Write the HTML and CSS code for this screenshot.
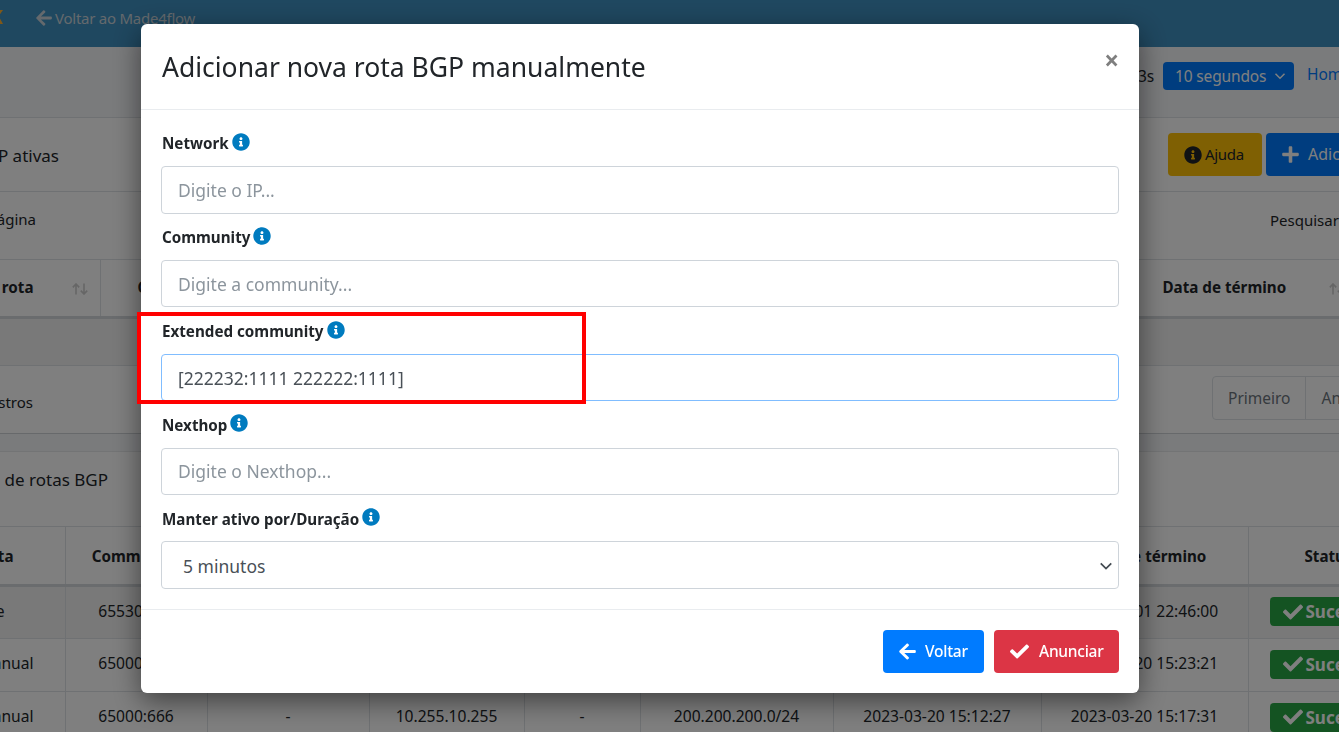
FILE: index.html
```html
<!DOCTYPE html>
<html lang="pt-BR">
<head>
<meta charset="utf-8">
<title>Rotas BGP</title>
<link rel="stylesheet" href="styles.css">
</head>
<body>
<svg class="defs" width="0" height="0" aria-hidden="true">
  <symbol id="i-info" viewBox="0 0 512 512"><path fill="currentColor" d="M256 8C119.043 8 8 119.083 8 256c0 136.997 111.043 248 248 248s248-111.003 248-248C504 119.083 392.957 8 256 8zm0 110c23.196 0 42 18.804 42 42s-18.804 42-42 42-42-18.804-42-42 18.804-42 42-42zm56 254c0 6.627-5.373 12-12 12h-88c-6.627 0-12-5.373-12-12v-24c0-6.627 5.373-12 12-12h12v-64h-12c-6.627 0-12-5.373-12-12v-24c0-6.627 5.373-12 12-12h64c6.627 0 12 5.373 12 12v100h12c6.627 0 12 5.373 12 12v24z"/></symbol>
  <symbol id="i-left" viewBox="0 0 448 512"><path fill="currentColor" d="M257.5 445.1l-22.2 22.2c-9.4 9.4-24.6 9.4-33.9 0L7 273c-9.4-9.4-9.4-24.6 0-33.9L201.4 44.7c9.4-9.4 24.6-9.4 33.9 0l22.2 22.2c9.5 9.5 9.3 25-.4 34.3L136.6 216H424c13.3 0 24 10.7 24 24v32c0 13.3-10.7 24-24 24H136.6l120.5 114.8c9.8 9.3 10 24.8.4 34.3z"/></symbol>
  <symbol id="i-check" viewBox="0 0 512 512"><path fill="currentColor" d="M173.898 439.404l-166.4-166.4c-9.997-9.997-9.997-26.206 0-36.204l36.203-36.204c9.997-9.998 26.207-9.998 36.204 0L192 312.69 432.095 72.596c9.997-9.997 26.207-9.997 36.204 0l36.203 36.204c9.997 9.997 9.997 26.206 0 36.204l-294.4 294.401c-9.998 9.997-26.207 9.997-36.204-.001z"/></symbol>
  <symbol id="i-plus" viewBox="0 0 448 512"><path fill="currentColor" d="M416 208H272V64c0-17.67-14.33-32-32-32h-32c-17.67 0-32 14.33-32 32v144H32c-17.67 0-32 14.33-32 32v32c0 17.67 14.33 32 32 32h144v144c0 17.67 14.33 32 32 32h32c17.67 0 32-14.33 32-32V304h144c17.67 0 32-14.33 32-32v-32c0-17.67-14.33-32-32-32z"/></symbol>
  <symbol id="i-sort" viewBox="0 0 16 12"><path fill="none" stroke="currentColor" stroke-width="1.6" d="M4 11.5V1M0.8 4.4L4 1l3.2 3.4M12 .5V11M8.8 7.6L12 11l3.2-3.4"/></symbol>
  <symbol id="i-logo" viewBox="0 0 16 16"><path fill="currentColor" d="M0 0h5l3 4 3-4h5l-5 7 5 9h-5l-3-5-3 5H0l5-9z"/></symbol>
</svg>

<div class="page">
  <header class="navbar">
    <svg class="nav-logo"><use href="#i-logo"/></svg>
    <a class="nav-back"><svg class="nav-arrow"><use href="#i-left"/></svg>Voltar ao Made4flow</a>
  </header>

  <div class="subbar">
    <span class="timer">3s</span>
    <span class="refresh">10 segundos <svg class="refresh-caret" viewBox="0 0 16 16"><path d="M2 5l6 6 6-6" fill="none" stroke="currentColor" stroke-width="2"/></svg></span>
    <a class="crumb">Home</a>
  </div>

  <section class="card">
    <div class="card-head">
      <h2 class="card-title card-title-a">Rotas BGP ativas</h2>
      <button class="btn-help"><svg class="help-icon"><use href="#i-info"/></svg><span class="btn-text">Ajuda</span></button>
      <button class="btn-add"><svg class="add-icon"><use href="#i-plus"/></svg><span class="btn-text">Adicionar</span></button>
    </div>
    <div class="tools">
      <span class="per-page">por página</span>
      <span class="search">Pesquisar</span>
    </div>
    <table class="grid grid-a">
      <colgroup><col class="a1"><col class="a2"><col class="a3"><col class="a4"></colgroup>
      <thead>
        <tr>
          <th class="th-rota">Tipo de rota<svg class="sort sort-a"><use href="#i-sort"/></svg></th>
          <th class="th-left">Community</th>
          <th></th>
          <th class="th-left th-end">Data de término<svg class="sort sort-b"><use href="#i-sort"/></svg></th>
        </tr>
      </thead>
      <tbody>
        <tr class="empty"><td colspan="4"></td></tr>
      </tbody>
    </table>
    <div class="card-foot">
      <span class="count">0 registros</span>
      <span class="pager"><a class="pager-item">Primeiro</a><a class="pager-item">Anterior</a></span>
    </div>
  </section>

  <section class="card card-second">
    <div class="card-head-b">
      <h2 class="card-title card-title-b">Histórico de rotas BGP</h2>
    </div>
    <table class="grid grid-b">
      <colgroup><col class="b1"><col class="b2"><col class="b3"><col class="b4"><col class="b5"><col class="b6"><col class="b7"><col class="b8"><col class="b9"></colgroup>
      <thead>
        <tr>
          <th class="c1 c1-h">Tipo de rota</th><th>Community</th><th>Ext</th><th>Nexthop</th><th>Tag</th><th>Network</th><th>Data de início</th><th>Data de término</th><th>Status</th>
        </tr>
      </thead>
      <tbody>
        <tr class="odd"><td class="c1 c1-r1">Rule</td><td>65530:666</td><td>-</td><td>10.255.10.255</td><td>-</td><td>200.200.200.0/24</td><td>2023-03-01 22:40:00</td><td>2023-03-01 22:46:00</td><td class="st"><span class="badge"><svg class="badge-icon"><use href="#i-check"/></svg>Sucesso</span></td></tr>
        <tr><td class="c1 c1-r">Manual</td><td>65000:666</td><td>-</td><td>10.255.10.255</td><td>-</td><td>200.200.200.0/24</td><td>2023-03-20 15:18:21</td><td>2023-03-20 15:23:21</td><td class="st"><span class="badge"><svg class="badge-icon"><use href="#i-check"/></svg>Sucesso</span></td></tr>
        <tr><td class="c1 c1-r">Manual</td><td>65000:666</td><td>-</td><td>10.255.10.255</td><td>-</td><td>200.200.200.0/24</td><td>2023-03-20 15:12:27</td><td>2023-03-20 15:17:31</td><td class="st"><span class="badge"><svg class="badge-icon"><use href="#i-check"/></svg>Sucesso</span></td></tr>
      </tbody>
    </table>
  </section>
</div>

<div class="backdrop">
  <div class="modal">
    <div class="modal-head">
      <h1 class="modal-title">Adicionar nova rota BGP manualmente</h1>
      <span class="close">×</span>
    </div>
    <form class="modal-body">
      <div class="group">
        <label class="label">Network <svg class="info"><use href="#i-info"/></svg></label>
        <input class="field" placeholder="Digite o IP...">
      </div>
      <div class="group">
        <label class="label">Community <svg class="info"><use href="#i-info"/></svg></label>
        <input class="field" placeholder="Digite a community...">
      </div>
      <div class="group">
        <label class="label">Extended community <svg class="info"><use href="#i-info"/></svg></label>
        <input class="field field-focus" value="[222232:1111 222222:1111]">
      </div>
      <div class="group">
        <label class="label">Nexthop <svg class="info"><use href="#i-info"/></svg></label>
        <input class="field" placeholder="Digite o Nexthop...">
      </div>
      <div class="group">
        <label class="label">Manter ativo por/Duração <svg class="info"><use href="#i-info"/></svg></label>
        <div class="field field-select">5 minutos<svg class="select-caret" viewBox="0 0 16 16"><path d="M2 5l6 6 6-6" fill="none" stroke="currentColor" stroke-width="2"/></svg></div>
      </div>
    </form>
    <div class="modal-foot">
      <button class="action action-back"><svg class="action-icon"><use href="#i-left"/></svg>Voltar</button>
      <button class="action action-send"><svg class="action-icon action-check"><use href="#i-check"/></svg>Anunciar</button>
    </div>
  </div>
</div>

<div class="annotation"></div>
</body>
</html>
```

FILE: styles.css
```css
* { box-sizing: border-box; }
html, body { margin: 0; height: 100%; overflow: hidden; }
body {
  font-family: "Noto Sans", "Open Sans", sans-serif;
  font-size: 15.5px;
  color: #212529;
  background: #f4f6f9;
}
.defs { position: absolute; }

.page { width: 1339px; height: 732px; overflow: hidden; }

.navbar {
  height: 47px;
  background: #3f90c0;
  display: flex;
  align-items: flex-start;
  padding-top: 8px;
  color: #c9d3da;
}
.nav-logo { width: 16px; height: 14px; margin: 2px 32px 0 -12px; color: #ffb030; flex: none; }
.nav-back { display: flex; align-items: center; font-size: 15px; line-height: 20px; letter-spacing: -.25px; }
.nav-arrow { width: 16px; height: 18px; margin-right: 3px; }

.subbar {
  height: 71px;
  display: flex;
  align-items: center;
  border-bottom: 1px solid #dee2e6;
  padding-bottom: 13px;
  padding-left: 1138px;
  white-space: nowrap;
  overflow: hidden;
}
.timer { width: 25px; flex: none; }
.refresh {
  flex: none;
  width: 131px; height: 28px;
  background: #007bff;
  color: #fff;
  border-radius: 4px;
  display: flex; align-items: center;
  padding-left: 12px;
  font-size: 15.5px;
  letter-spacing: -.15px;
}
.refresh-caret { width: 12px; height: 12px; margin-left: 8px; }
.crumb { flex: none; margin-left: 13px; color: #007bff; margin-top: -4px; }

.card { background: #fff; }
.card-head {
  height: 74px;
  display: flex; align-items: center;
  border-bottom: 1px solid #dee2e6;
  padding-left: 1168px;
  position: relative;
  white-space: nowrap;
  overflow: hidden;
}
.card-title { font-weight: 400; font-size: 17px; margin: 0; white-space: nowrap; }
.card-title-a { position: absolute; right: 1280px; top: 26px; }
.btn-help, .btn-add {
  height: 43px; border: 0; border-radius: 4px;
  font: inherit; font-size: 15px;
  display: flex; align-items: center; flex: none;
}
.btn-text { padding-bottom: 2px; }
.btn-help { width: 94px; background: #ffc107; color: #212529; padding: 0 0 0 16px; letter-spacing: -.3px; }
.help-icon { width: 18px; height: 18px; margin-right: 3px; }
.btn-add { width: 130px; margin-left: 4px; background: #007bff; color: #fff; padding: 0 0 0 16px; font-size: 16px; }
.add-icon { width: 17px; height: 19px; margin-right: 9px; }

.tools {
  height: 67px;
  position: relative;
  display: flex; align-items: center;
  padding-left: 1270px;
  padding-bottom: 11px;
  white-space: nowrap;
  overflow: hidden;
}
.search { flex: none; font-size: 15px; }
.per-page { position: absolute; right: 1303px; top: 17px; font-size: 15px; }

.grid { border-collapse: collapse; table-layout: fixed; white-space: nowrap; }
.grid th { font-weight: 700; font-size: 15.2px; border-right: 1px solid #dee2e6; border-top: 1px solid #dee2e6; border-bottom: 3px solid #d4d8dc; position: relative; padding: 0 0 2px; }
.grid-a { width: 1500px; margin-left: -100px; }
.grid-a thead tr { height: 58px; }
.a1 { width: 200px; } .a2 { width: 800px; } .a3 { width: 200px; } .a4 { width: 300px; }
.grid .th-rota { text-align: right; padding-right: 66px; }
.grid .th-left { text-align: left; padding-left: 37px; }
.grid .th-end { border-right: 0; padding-left: 62px; }
.sort { position: absolute; top: 23px; width: 16px; height: 12px; color: #ccc; }
.sort-a { left: 172px; }
.sort-b { left: 228px; }
.empty { height: 48px; background: #f2f2f2; }
.empty td { border-bottom: 1px solid #dee2e6; }

.card-foot {
  height: 68px;
  display: flex; align-items: center;
  padding-left: 1212px;
  padding-bottom: 4px;
  position: relative;
  white-space: nowrap;
  border-bottom: 1px solid #ced2d6;
  overflow: hidden;
}
.count { position: absolute; right: 1306px; top: 26px; font-size: 15px; }
.pager { display: flex; flex: none; height: 44px; border: 1px solid #dee2e6; border-radius: 4px 0 0 4px; color: #6c757d; }
.pager-item { padding: 0 15px; display: flex; align-items: center; border-right: 1px solid #dee2e6; }

.card-second { margin-top: 17px; border-top: 1px solid #e6e8ea; }
.card-head-b { height: 74px; position: relative; }
.card-title-b { position: absolute; right: 1231px; top: 16px; }
.grid-b { width: 1409px; margin-left: -100px; }
.b1 { width: 165px; } .b2 { width: 142px; } .b3 { width: 162px; } .b4 { width: 155px; } .b5 { width: 116px; } .b6 { width: 193px; } .b7 { width: 208px; } .b8 { width: 207px; } .b9 { width: 161px; }
.grid-b thead tr { height: 59px; }
.grid .grid-b-th, .grid-b th { text-align: center; padding-bottom: 0; }
.grid-b td { text-align: center; border-right: 1px solid #dee2e6; border-bottom: 1px solid #dee2e6; padding: 0 0 4px; height: 53px; font-size: 15.6px; }
.grid-b .c1 { text-align: right; }
.grid-b .c1-h { padding-right: 51px; }
.grid-b .c1-r1 { padding-right: 60px; }
.grid-b .c1-r { padding-right: 31px; }
.odd { background: #f2f2f2; }
.grid-b .st { text-align: left; padding: 0 0 2px 21px; }
.badge {
  display: inline-flex; align-items: center;
  height: 29px; padding: 0 10px 0 13px;
  background: #28a745; color: #fff;
  border-radius: 4px;
  font-weight: 700; font-size: 17px;
  vertical-align: middle;
}
.badge-icon { width: 20px; height: 20px; margin-right: 3px; }

.backdrop {
  position: fixed; inset: 0;
  background: rgba(0, 0, 0, .5);
  padding: 24px 0 0 141px;
}
.modal {
  width: 998px;
  background: #fff;
  border-radius: 6px;
  box-shadow: 0 8px 28px rgba(0, 0, 0, .5);
}
.modal-head {
  height: 86px;
  display: flex; align-items: center; justify-content: space-between;
  padding: 0 20px 0 21px;
  border-bottom: 1px solid #e9ecef;
}
.modal-title { margin: 0; font-weight: 400; font-size: 26.5px; color: #212529; }
.close { font-size: 26px; font-weight: 700; color: #7f7f7f; line-height: 1; margin-top: -14px; }

.modal-body { padding: 21.45px 20px 20.1px; display: flex; flex-direction: column; gap: 11.55px; border-bottom: 1px solid #e9ecef; }
.group { display: flex; flex-direction: column; gap: 10.75px; }
.label { height: 24px; display: flex; align-items: center; gap: 3px; padding-left: 1px; font-size: 15.2px; font-weight: 700; }
.info { width: 18px; height: 18px; color: #007bbf; margin-top: -3px; }
.field {
  display: block; width: 100%; height: 47.5px;
  border: 1px solid #ced4da; border-radius: 4px;
  padding: 0 16px;
  font: inherit; font-size: 17.5px;
  color: #495057; background: #fff; outline: 0;
}
.field::placeholder { color: #8c959d; opacity: 1; }
.field-focus { border-color: #80bdff; }
.field-select { display: flex; align-items: center; justify-content: space-between; padding: 1px 5px 0 21px; }
.select-caret { width: 14px; height: 14px; color: #444b52; }

.modal-foot { height: 83px; display: flex; justify-content: flex-end; gap: 10px; padding: 20px; }
.action {
  height: 43px; border: 0; border-radius: 4px; color: #fff;
  font: inherit; font-size: 15.5px; font-weight: 500; letter-spacing: -.25px;
  display: flex; align-items: center; padding: 0 0 0 16px;
}
.action-back { width: 101px; background: #007bff; }
.action-send { width: 125px; background: #dc3545; }
.action-icon { width: 17px; height: 19px; margin-right: 9px; }
.action-check { width: 19px; margin-right: 10px; }

.annotation {
  position: fixed; left: 137px; top: 312px;
  width: 449px; height: 92px;
  border: 4px solid #f00;
}
```
